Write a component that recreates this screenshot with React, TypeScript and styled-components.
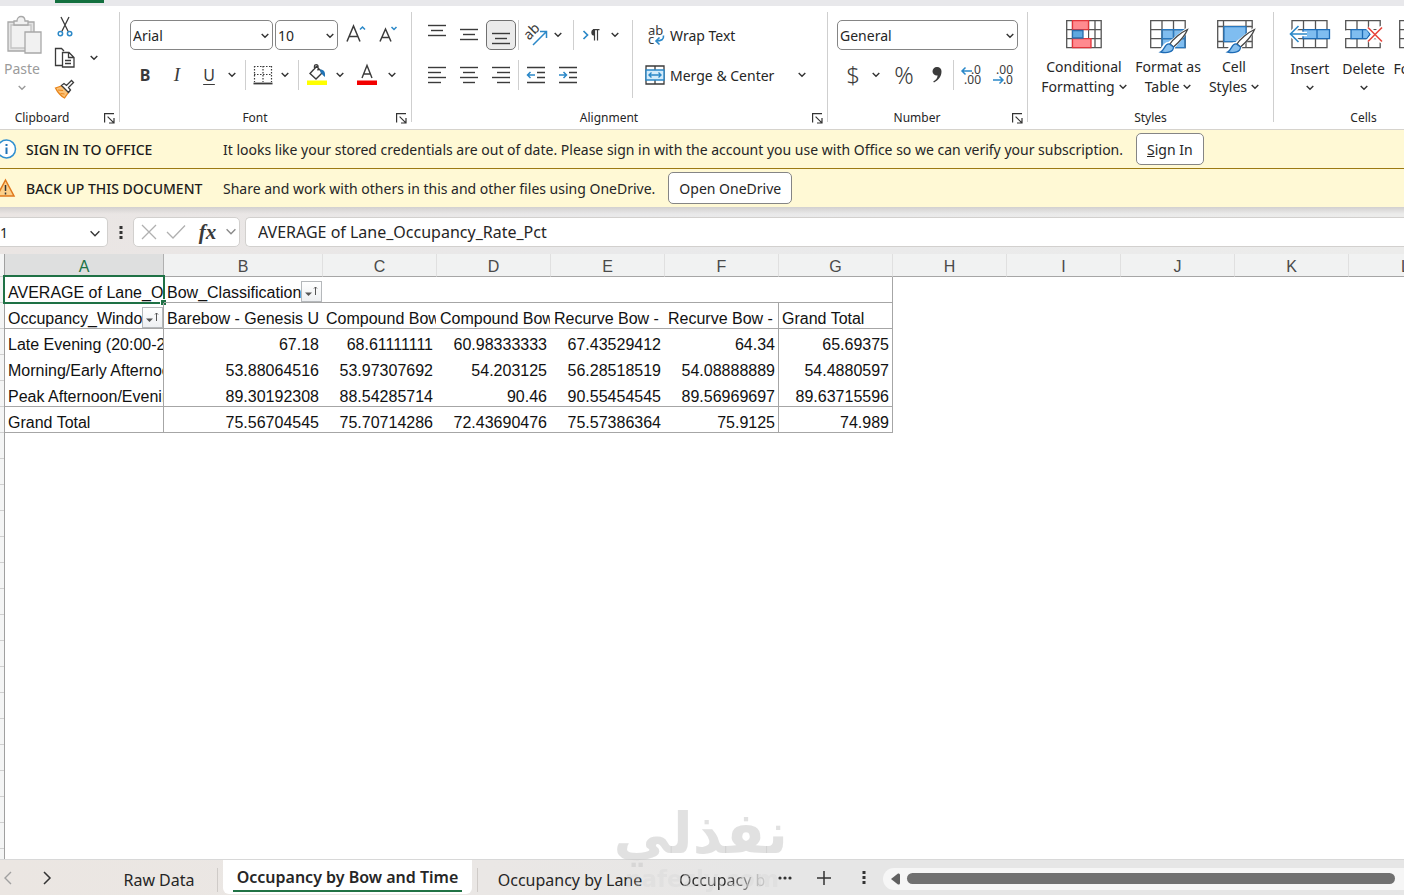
import React from "react";
import styled, { createGlobalStyle, css } from "styled-components";

const ink = "#3b3b3b";
const blue = "#2b88c8";

const GlobalStyle = createGlobalStyle`
  *, *::before, *::after { box-sizing: border-box; }
  body {
    margin: 0;
    font-family: "Noto Sans", "Open Sans", sans-serif;
    font-size: 14px;
    color: #262626;
    background: #fff;
    overflow: hidden;
  }
  button, select, input { font: inherit; color: inherit; }
  button { border: 0; padding: 0; margin: 0; background: none; }
  svg { overflow: visible; }
`;

const Page = styled.div`
  display: flex;
  flex-direction: column;
  height: 100vh;
  overflow: hidden;
`;

/* ---------- Ribbon ---------- */

const TitleStrip = styled.div`
  flex: none;
  height: 6px;
  padding-left: 55px;
  background: #e8e8eb;
`;

const ActiveTabMark = styled.div`
  width: 49px;
  height: 3px;
  background: #13703f;
`;

const Ribbon = styled.header`
  flex: none;
  display: flex;
  height: 124px;
  padding: 6px 0 7px;
  border-bottom: 1px solid #d6d3cd;
  overflow: hidden;
`;

const Group = styled.section<{ $width: number; $last?: boolean }>`
  flex: none;
  display: flex;
  flex-direction: column;
  justify-content: space-between;
  width: ${(p) => p.$width}px;
  border-right: 1px solid ${(p) => (p.$last ? "transparent" : "#cfcfcf")};
`;

const GroupFooter = styled.div<{ $shift?: boolean }>`
  display: flex;
  align-items: center;
  height: 8px;
  font-size: 12px;
  line-height: 8px;
  ${(p) => p.$shift && css`
    & > span { padding-right: 14px; }
  `}
`;

const GroupName = styled.span`
  flex: 1;
  text-align: center;
`;

const Launcher = styled.button`
  display: flex;
  justify-content: flex-end;
  width: 21px;
  padding-right: 4px;
`;

const GroupRows = styled.div<{ $pad: number }>`
  flex: none;
  display: flex;
  flex-direction: column;
  gap: 10px;
  padding: 8px 0 0 ${(p) => p.$pad}px;
`;

const ToolRow = styled.div`
  display: flex;
  align-items: center;
  height: 30px;
`;

const ToolButton = styled.button<{ $w?: number; $on?: boolean }>`
  flex: none;
  display: flex;
  align-items: center;
  justify-content: center;
  width: ${(p) => p.$w ?? 32}px;
  height: 30px;
  color: ${ink};
  ${(p) => p.$on && css`
    width: 30px;
    margin: 0 1px;
    border: 1px solid #707070;
    border-radius: 5px;
    background: #ebebeb;
  `}
`;

const Letter = styled.span<{ $kind: "bold" | "italic" | "under" }>`
  font-size: 16px;
  line-height: 20px;
  ${(p) => p.$kind === "bold" && css`font-weight: 700;`}
  ${(p) => p.$kind === "italic" && css`font-family: "Liberation Serif", serif; font-style: italic; font-size: 19px;`}
  ${(p) => p.$kind === "under" && css`text-decoration: underline; text-underline-offset: 3px;`}
`;

const Symbol = styled.span`
  font-size: 24px;
  line-height: 28px;
  font-weight: 300;
`;

const Divider = styled.div<{ $l?: number; $r?: number }>`
  flex: none;
  width: 1px;
  height: 30px;
  margin: 0 ${(p) => p.$r ?? 2}px 0 ${(p) => p.$l ?? 6}px;
  background: #cfcfcf;
`;

const TallDivider = styled.div`
  flex: none;
  width: 1px;
  height: 78px;
  margin: 8px 0 0;
  background: #cfcfcf;
`;

const Split = styled.div`
  display: flex;
`;

const AlignTools = styled(GroupRows)`
  width: 220px;
`;

const LabelButton = styled.button`
  flex: none;
  display: flex;
  align-items: center;
  gap: 5px;
  height: 30px;
  white-space: nowrap;
`;

const Combo = styled.div<{ $w: number }>`
  position: relative;
  display: flex;
  width: ${(p) => p.$w}px;
  height: 30px;
  margin-right: 2px;
  & > select {
    width: 100%;
    appearance: none;
    padding: 0 20px 0 2px;
    border: 1px solid #858585;
    border-radius: 5px;
    background: #fff;
  }
  & > svg {
    position: absolute;
    right: 4px;
    top: 13px;
    pointer-events: none;
  }
`;

const FontTools = styled(GroupRows)`
  & > div:first-child { padding-left: 1px; }
`;

const ClipboardBody = styled.div`
  display: flex;
`;

const PasteButton = styled.button`
  display: flex;
  flex-direction: column;
  align-items: center;
  width: 44px;
  padding-top: 4px;
  color: #9b9b9b;
  line-height: 20px;
  & > svg:first-child { margin-left: 6px; margin-bottom: 3px; }
  & > svg:last-child { margin-top: 6px; }
`;

const SmallStack = styled.div`
  display: flex;
  flex-direction: column;
  gap: 1px;
  width: 42px;
`;

const CopyMore = styled.button`
  align-self: flex-start;
  width: 16px;
  height: 30px;
  margin-top: 28px;
`;

const BigButtons = styled.div<{ $pad: number }>`
  display: flex;
  padding: 6px ${(p) => p.$pad}px 0;
`;

const BigButton = styled.button<{ $w: number; $stacked?: boolean }>`
  display: flex;
  flex-direction: column;
  align-items: center;
  width: ${(p) => p.$w}px;
  line-height: 20px;
  white-space: nowrap;
  & > svg:first-child { margin-bottom: ${(p) => (p.$stacked ? 5 : 3)}px; }
  & > svg:last-child { margin-top: 6px; }
`;

const LabelLine = styled.span`
  display: flex;
  align-items: center;
  gap: 4px;
`;

/* ---------- Message bars ---------- */

const MessageBar = styled.section<{ $line?: boolean }>`
  flex: none;
  display: flex;
  align-items: center;
  height: ${(p) => (p.$line ? 39 : 38)}px;
  background: #fff9d5;
  white-space: nowrap;
  overflow: hidden;
  border-bottom: ${(p) => (p.$line ? "1px solid #9c7a12" : "0")};
`;

const MessageIcon = styled.span`
  flex: none;
  display: flex;
  width: 26px;
`;

const MessageTitle = styled.strong`
  flex: none;
  width: 197px;
  font-weight: 500;
  color: #1c1c1c;
`;

const MessageButton = styled.button`
  flex: none;
  height: 32px;
  margin-left: 13px;
  padding: 0 10px;
  border: 1px solid #858585;
  border-radius: 5px;
  background: #fff;
`;

/* ---------- Formula bar ---------- */

const FormulaBar = styled.div`
  flex: none;
  display: flex;
  align-items: center;
  height: 47px;
  padding-top: 3px;
  background: linear-gradient(to bottom, #d2d0cf 0, rgba(232, 230, 229, 0) 7px),
    linear-gradient(to right, #eae5e3 0, #e9e9ea 45%, #ececeb 100%);
`;

const NameBox = styled.div`
  position: relative;
  width: 108px;
  height: 30px;
  & > input {
    width: 100%;
    height: 30px;
    padding: 0;
    border: 1px solid #d2d0ce;
    border-left: 0;
    border-radius: 0 5px 5px 0;
    background: #fff;
  }
  & > svg {
    position: absolute;
    right: 7px;
    top: 13px;
  }
`;

const Dots = styled.span`
  display: flex;
  justify-content: center;
  width: 25px;
`;

const FormulaActions = styled.div`
  display: flex;
  align-items: center;
  justify-content: space-between;
  width: 107px;
  height: 30px;
  padding: 0 2px 0 7px;
  border: 1px solid #d2d0ce;
  border-radius: 5px;
  background: #fff;
  & > button { display: flex; }
`;

const Fx = styled.span`
  padding-left: 4px;
  font: italic 700 21px/24px "Liberation Serif", serif;
  color: #3a3a3a;
`;

const FormulaInput = styled.input`
  flex: 1;
  min-width: 0;
  height: 30px;
  margin-left: 5px;
  padding: 0 12px;
  border: 1px solid #d2d0ce;
  border-right: 0;
  border-radius: 5px 0 0 5px;
  background: #fff;
  font-size: 16px;
`;

/* ---------- Sheet ---------- */

const Sheet = styled.main`
  flex: 1;
  display: flex;
  min-height: 0;
  overflow: hidden;
  background: #fff;
`;

const Gutter = styled.div`
  flex: none;
  width: 5px;
  border-right: 1px solid #a0a0a0;
  background: repeating-linear-gradient(to bottom, #f4f5f5 0 22px, #d0d0d0 22px 23px, #f4f5f5 23px 26px);
`;

const Grid = styled.table`
  flex: none;
  align-self: flex-start;
  width: 1458px;
  table-layout: fixed;
  border-collapse: separate;
  border-spacing: 0;
  font-family: "Liberation Sans", Arial, sans-serif;
  font-size: 16px;
  line-height: 20px;
  color: #111;
`;

const ColumnHead = styled.th<{ $on?: boolean }>`
  height: 23px;
  padding: 3px 0 0;
  font-weight: 400;
  line-height: 19px;
  color: ${(p) => (p.$on ? "#217346" : "#4a4a4a")};
  background: ${(p) => (p.$on ? "#dedfdf" : "#f1f2f2")};
  border-right: 1px solid ${(p) => (p.$on ? "#b0b0b0" : "#e0e0e0")};
  border-bottom: 1px solid #a6a6a6;
`;

const Cell = styled.td<{ $num?: boolean; $b?: boolean; $r?: boolean }>`
  position: relative;
  height: 26px;
  padding: 0;
  text-align: ${(p) => (p.$num ? "right" : "left")};
  box-shadow: inset ${(p) => (p.$r ? "-1px" : "0")} 0 #a6a6a6, inset 0 ${(p) => (p.$b ? "-1px" : "0")} #a6a6a6;
`;

const CellText = styled.div`
  height: 26px;
  margin-right: 1px;
  padding: 6px 3px 0 3px;
  overflow: hidden;
  white-space: nowrap;
`;

const Selection = styled.div`
  position: absolute;
  inset: -2px -1px -1px -2px;
  border: 2px solid #1e7145;
  &::after {
    content: "";
    position: absolute;
    right: -3px;
    bottom: -3px;
    width: 6px;
    height: 6px;
    background: #1e7145;
    border-left: 1px solid #fff;
    border-top: 1px solid #fff;
  }
`;

const FilterButton = styled.button`
  position: absolute;
  right: 1px;
  top: 4px;
  display: flex;
  width: 21px;
  height: 21px;
  border: 1px solid #b5b8bb;
  background: linear-gradient(#fff, #eef0f2);
`;

/* ---------- Sheet tabs ---------- */

const TabBar = styled.footer`
  flex: none;
  display: flex;
  height: 36px;
  border-top: 1px solid #d8d8d8;
  background: linear-gradient(to right, #ebe6e2 0, #eae7e5 35%, #e6e6e6 55%);
  font-size: 16px;
  overflow: hidden;
`;

const NavButton = styled.button<{ $w: number }>`
  flex: none;
  display: flex;
  align-items: center;
  justify-content: center;
  width: ${(p) => p.$w}px;
`;

const SheetTab = styled.button<{ $w: number; $left?: boolean; $right?: boolean }>`
  flex: none;
  width: ${(p) => p.$w}px;
  height: 24px;
  margin-top: 8px;
  line-height: 24px;
  white-space: nowrap;
  border-left: 1px solid ${(p) => (p.$left ? "#cfcbc8" : "transparent")};
  border-right: 1px solid ${(p) => (p.$right ? "#cfcbc8" : "transparent")};
`;

const FadingTab = styled(SheetTab)`
  text-align: left;
  padding-left: 15px;
  background: linear-gradient(to right, #262626 60%, #d0d0d0 100%);
  background-clip: text;
  color: transparent;
`;

const ActiveTab = styled.button`
  flex: none;
  min-width: 249px;
  height: 34px;
  margin: 0 5px;
  padding: 0 10px;
  border-radius: 0 0 6px 6px;
  background: #fff;
  font-weight: 600;
  & > span {
    display: block;
    height: 30px;
    line-height: 30px;
    border-bottom: 2px solid #217346;
  }
`;

const ScrollTrack = styled.div`
  flex: 1;
  display: flex;
  align-items: center;
  gap: 6px;
  height: 22px;
  margin-top: 8px;
  padding: 0 9px 1px 8px;
  border-radius: 11px 0 0 11px;
  background: #f6f6f6;
`;

const ScrollThumb = styled.div`
  flex: 1;
  height: 11px;
  border-radius: 6px;
  background: #707070;
`;

const Watermark = styled.div`
  position: fixed;
  left: 50%;
  bottom: 0;
  width: 172px;
  margin-left: -86px;
  height: 97px;
  text-align: center;
  pointer-events: none;
  font-family: "DejaVu Sans", sans-serif;
  font-weight: 700;
  white-space: nowrap;
`;

const WatermarkName = styled.div`
  font-size: 57px;
  line-height: 70px;
  color: rgba(200, 200, 200, 0.55);
`;

const WatermarkSite = styled.div`
  font-size: 23px;
  line-height: 22px;
  color: rgba(215, 215, 215, 0.4);
`;

/* ---------- Icons ---------- */

const Chevron = ({ color = "#333", size = 8 }: { color?: string; size?: number }) => (
  <svg width={size} height={size / 2 + 2} viewBox="0 0 8 6" fill="none" stroke={color} strokeWidth={size > 10 ? 1 : 1.4}>
    <path d="M.7 1 4 4.3 7.3 1" />
  </svg>
);

const More = ({ label }: { label: string }) => (
  <ToolButton $w={14} aria-label={label}><Chevron /></ToolButton>
);

const LauncherIcon = () => (
  <svg width="11" height="11" viewBox="0 0 11 11" fill="none" stroke="#333" strokeWidth="1.2">
    <path d="M.6 9.5V.6h9.4M3.6 3.6l6 6M10 5v5H5" />
  </svg>
);

const PasteIcon = () => (
  <svg width="36" height="40" viewBox="0 0 36 40" fill="#f1f1f1" stroke="#a8a8a8" strokeWidth="1.3">
    <path d="M1 6h26v29H1z" fill="#e4e4e4" />
    <path d="M4 9h20v23H4z" stroke="#c4c4c4" />
    <path d="M7 9V5h3c0-6 8-6 8 0h3v4z" />
    <path d="M18 16h16v21H18z" />
  </svg>
);

const CutIcon = () => (
  <svg width="16" height="22" viewBox="0 0 16 22" fill="none" strokeWidth="1.3">
    <path d="M4 1l7.2 14.5M12 1 4.8 15.5" stroke={ink} />
    <circle cx="3.4" cy="17.6" r="2.2" stroke={blue} strokeWidth="1.5" />
    <circle cx="12.6" cy="17.6" r="2.2" stroke={blue} strokeWidth="1.5" />
  </svg>
);

const CopyIcon = () => (
  <svg width="22" height="22" viewBox="0 0 22 22" fill="none" stroke={ink} strokeWidth="1.3">
    <path d="M8 18.5H1.5v-17h6l2.5 2.5" />
    <path d="M8.5 5.5h6.5l5 5v9.500H8.500zM14.500 5.500v5h5M11 13.500h6M11 16.500h6" />
  </svg>
);

const PainterIcon = () => (
  <svg width="22" height="20" viewBox="0 0 22 20" fill="none">
    <path d="M1.500 9 9 6.500l6 6-4.500 6.500C8 18 3.500 13.500 1.500 9z" fill="#fbc277" stroke="#e8841a" strokeWidth="1.300" />
    <path d="M4 11l5 .5M6.500 14.500l4 .5" stroke="#e8841a" />
    <path d="M7.500 6.500 10 4.500l2.500 2 5-5 2 2-5 5 2 2.500-2 2.500z" fill="#fff" stroke={ink} strokeWidth="1.300" />
  </svg>
);

const GrowIcon = ({ down }: { down?: boolean }) => (
  <svg width="22" height="22" viewBox="0 0 22 22" fill="none" strokeWidth="1.500">
    <path d={down ? "M3 17.500 8.500 5 14 17.500M5 13.500h7" : "M2 17.500 8.500 2 15 17.500M4.500 12.500h8"} stroke={ink} />
    <path d={down ? "M14.500 3l2.500 2.500 2.500-2.500" : "M15 5.500l2.500-2.500L20 5.500"} stroke={blue} />
  </svg>
);

const BordersIcon = () => (
  <svg width="20" height="20" viewBox="0 0 20 20" fill="none" stroke={ink}>
    <path d="M1 1.500h18M1 9.500h18M1.500 1v16M10 1v16M18.500 1v16" strokeDasharray="1.500 1.500" strokeWidth="1.200" />
    <path d="M.5 18.500h19" strokeWidth="1.800" />
  </svg>
);

const FillIcon = () => (
  <svg width="22" height="22" viewBox="0 0 22 22" fill="none">
    <path d="M4 9.500 10.500 2.500l6 6-6.500 6.500zM8.500 5V2.500c0-2.500 3.500-2.500 3.500 0v4" stroke={ink} strokeWidth="1.400" />
    <path d="M14 5.500c4 0 5.500 2 5 7.500-2-1-2.500-3-4.500-4.500z" fill="#2173b5" />
    <path d="M1 16.500h20v4.500H1z" fill="#ffff00" />
  </svg>
);

const FontColorIcon = () => (
  <svg width="22" height="22" viewBox="0 0 22 22" fill="none">
    <path d="M6 14 11 1.500 16 14M7.500 10h7" stroke={ink} strokeWidth="1.400" />
    <path d="M1 16.500h20v4.500H1z" fill="#f20000" />
  </svg>
);

const Lines = ({ rows, dy = 0 }: { rows: [number, number, number][]; dy?: number }) => (
  <svg width="20" height="20" viewBox="0 0 20 20" stroke={ink} strokeWidth="1.400">
    {rows.map(([x1, x2, y]) => (
      <path key={y} d={`M${x1} ${y + dy}H${x2}`} />
    ))}
  </svg>
);

const vertical: [number, number, number][] = [[1, 19, 5.5], [4, 16, 10.5], [1, 19, 15.5]];

const OrientationIcon = () => (
  <svg width="24" height="24" viewBox="0 0 24 24" fill="none">
    <g transform="translate(8 9) rotate(-45)">
      <text x="0" y="4" textAnchor="middle" fontSize="14" fontFamily="Noto Sans" fill={ink}>ab</text>
    </g>
    <path d="M9 22 22 9M16 8.500h6.500V15" stroke={blue} strokeWidth="1.500" />
  </svg>
);

const DirectionIcon = () => (
  <svg width="22" height="20" viewBox="0 0 22 20" fill="none">
    <path d="M2.500 6 6.500 10l-4 4" stroke={blue} strokeWidth="1.700" />
    <path d="M13.500 15.500v-11M16.500 15.500v-11M12 4.700h6.500" stroke={ink} strokeWidth="1.200" />
    <path d="M13.500 4.200a3.200 3.200 0 0 0 0 6.400z" fill={ink} />
  </svg>
);

const IndentIcon = ({ out }: { out?: boolean }) => (
  <svg width="20" height="20" viewBox="0 0 20 20" fill="none" strokeWidth="1.400">
    <path d="M1 2.500h18M11 7.500h8M11 12.500h8M1 17.500h18" stroke={ink} />
    <path d={out ? "M9 10H1.500M4.500 7l-3 3 3 3" : "M1 10h7.500M5.500 7l3 3-3 3"} stroke={blue} strokeWidth="1.500" />
  </svg>
);

const WrapIcon = () => (
  <svg width="20" height="22" viewBox="0 0 20 22" fill="none">
    <text x="3" y="11" fontSize="13" fontFamily="Noto Sans" fill={ink}>ab</text>
    <text x="3" y="20" fontSize="13" fontFamily="Noto Sans" fill={ink}>c</text>
    <path d="M18.500 11.500c.5 4-2 5.500-7.500 5.500M14.500 13.500 11 17l3.500 3.500" stroke={blue} strokeWidth="1.600" />
  </svg>
);

const MergeIcon = () => (
  <svg width="20" height="20" viewBox="0 0 20 20" fill="none">
    <path d="M1 1h18v18H1zM10 1v18" stroke={ink} strokeWidth="1.300" />
    <path d="M1 5h18v10H1z" fill="#d4ebfa" stroke={blue} strokeWidth="1.400" />
    <path d="M4 10h12M6.500 7.500 4 10l2.500 2.500M13.500 7.500 16 10l-2.500 2.500" stroke={blue} strokeWidth="1.400" />
  </svg>
);

const CommaIcon = () => (
  <svg width="12" height="18" viewBox="0 0 12 18" fill={ink}>
    <path d="M6 1a4.300 4.300 0 0 1 4.500 4.600C10.500 10.500 7.500 14.500 3 16.500l-.8-1C5 14 6.500 12 6.600 9.500 4 10 1.500 8 1.500 5.300A4.300 4.300 0 0 1 6 1z" />
  </svg>
);

const DecimalIcon = ({ less }: { less?: boolean }) => (
  <svg width="22" height="24" viewBox="0 0 22 24" fill="none">
    <g fontSize="12" fontFamily="Noto Sans" fill={ink} textAnchor="end">
      <text x="21" y="11">{less ? ".00" : ".0"}</text>
      <text x="21" y="21">{less ? ".0" : ".00"}</text>
    </g>
    <path d={less ? "M1 17h10M7.500 13.500 11 17l-3.500 3.500" : "M12 8H2M5.500 4.500 2 8l3.500 3.500"} stroke={blue} strokeWidth="1.500" />
  </svg>
);

const ConditionalIcon = () => (
  <svg width="36" height="36" viewBox="0 0 36 36" fill="none" strokeWidth="1.300">
    <path d="M.7 2.700h34.500v27H.7zM6.500 2.700v27M29 2.700v27M22.500 2.700v27M.7 11.700h34.500M.7 20.700h34.500" stroke="#555" />
    <path d="M7 12.200h15v8H7z" fill="#fff" />
    <path d="M6.500 2.700h16v9h-16zM6.500 20.700H25v9H6.500z" fill="#ff8a8f" stroke="#e0353b" />
    <path d="M6.500 12.500H17v7.500H6.500z" fill="#5fa8e0" stroke="#2b6cab" />
  </svg>
);

const Brush = () => (
  <g>
    <path d="M38 11 19 26c-5-1-5 6-9 8 7 2 13 0 13-5L38 11z" stroke="#fff" strokeWidth="4" />
    <path d="M37.500 11.500C31 14.500 23 21 20 26l3.500 3C28 25 35 18 37.500 11.500z" fill="#fff" stroke="#444" strokeWidth="1.300" />
    <path d="M19.500 26c-5-1-4.500 6-9 8 7 1.500 13 0 13-5z" fill="#86bfee" stroke="#1d6bb5" strokeWidth="1.300" />
  </g>
);

const TableFormatIcon = () => (
  <svg width="40" height="36" viewBox="-2 0 40 36" fill="none" strokeWidth="1.300">
    <path d="M12 11.700h23v18H12z" fill="#7fbdf0" />
    <path d="M.7 2.700h34.500v27H.7zM12 2.700v27M23.500 2.700v27M.7 11.700h34.500M.7 20.700h34.500" stroke="#555" />
    <path d="M12 29.700v-18h23v18H12M23.500 11.700v18M12 20.700h23" stroke="#2878bf" />
    <Brush />
  </svg>
);

const CellStylesIcon = () => (
  <svg width="42" height="36" viewBox="-4 0 42 36" fill="none" strokeWidth="1.300">
    <path d="M.7 2.700h34.500v27H.7zM6.500 2.700v27M29 2.700v27M.7 8.500h34.500M.7 23.500h34.500" stroke="#555" />
    <path d="M7 8.700h22v15H7z" fill="#7fbdf0" stroke="#2878bf" />
    <Brush />
  </svg>
);

const InsertIcon = () => (
  <svg width="42" height="36" viewBox="0 0 42 36" fill="none" strokeWidth="1.300">
    <path d="M3 2.700h35v27H3zM14.500 2.700v27M26.500 2.700v27M3 11.700h35M3 20.700h35" stroke="#555" />
    <path d="M14 11.700h26.500v9H14zM28 11.700v9" fill="#7fbdf0" stroke="#1d6bb5" />
    <path d="M18 16H1.500M9.500 8 1.500 16l8 8" stroke="#fff" strokeWidth="4.500" />
    <path d="M18 16H1.500M9.500 8 1.500 16l8 8" stroke={blue} strokeWidth="1.600" />
  </svg>
);

const DeleteIcon = () => (
  <svg width="38" height="36" viewBox="0 0 38 36" fill="none" strokeWidth="1.300">
    <path d="M.7 2.700h34.500v27H.7zM12 2.700v27M23.500 2.700v27M.7 11.700h34.500M.7 20.700h34.500" stroke="#555" />
    <path d="M0 12.400h5v7.600H0zM22 12.400h16v7.600H22z" fill="#fff" />
    <path d="M6 11.700h16l3 4.500-3 4.500H6zM17.500 11.700v9" fill="#7fbdf0" stroke="#1d6bb5" />
    <path d="M23 9.500 37 23.500M37 9.500 23 23.500" stroke="#fff" strokeWidth="5" />
    <path d="M23 9.500 37 23.500M37 9.500 23 23.500" stroke="#e8453c" strokeWidth="1.600" />
  </svg>
);

const FormatCellsIcon = () => (
  <svg width="36" height="36" viewBox="0 0 36 36" fill="none" stroke="#555" strokeWidth="1.300">
    <path d="M.7 2.700h34.500v27H.7zM12 2.700v27M23.500 2.700v27M.7 11.700h34.500M.7 20.700h34.500" />
  </svg>
);

const InfoIcon = () => (
  <svg width="17" height="20" viewBox="0 0 17 20" fill="none">
    <circle cx="6.500" cy="10" r="9" fill="#fff" stroke="#2f8fd0" strokeWidth="1.500" />
    <path d="M6.500 8.500V15M6.500 5v2" stroke="#2173b5" strokeWidth="2" />
  </svg>
);

const WarnIcon = () => (
  <svg width="17" height="20" viewBox="0 0 17 20" fill="none">
    <path d="M5.500 2 14 18H-3z" fill="#fcd08a" stroke="#e0781c" strokeWidth="1.500" />
    <path d="M5.500 7v6M5.500 14.500v2" stroke="#333" strokeWidth="1.500" />
  </svg>
);

const DotsIcon = () => (
  <svg width="4" height="15" viewBox="0 0 4 15" fill="#333">
    <path d="M.5 1h3v3h-3zM.5 6h3v3h-3zM.5 11h3v3h-3z" />
  </svg>
);

const SortIcon = () => (
  <svg width="19" height="19" viewBox="0 0 19 19" fill="none">
    <path d="M3 10.500h7L6.500 14z" fill="#555" />
    <path d="M13.500 13V5M12 6.500 13.500 5 15 6.500" stroke="#555" />
  </svg>
);

/* ---------- Data ---------- */

const columns = ["A", "B", "C", "D", "E", "F", "G", "H", "I", "J", "K", "L"];
const widths = [159, 159, 114, 114, 114, 114, 114, 114, 114, 114, 114, 114];

const rows: string[][] = [
  ["AVERAGE of Lane_Occupancy_Rate_Pct", "Bow_Classification", "", "", "", "", ""],
  ["Occupancy_Window", "Barebow - Genesis U", "Compound Bow", "Compound Bow", "Recurve Bow -", "Recurve Bow -", "Grand Total"],
  ["Late Evening (20:00-22:00)", "67.18", "68.61111111", "60.98333333", "67.43529412", "64.34", "65.69375"],
  ["Morning/Early Afternoon", "53.88064516", "53.97307692", "54.203125", "56.28518519", "54.08888889", "54.4880597"],
  ["Peak Afternoon/Evening", "89.30192308", "88.54285714", "90.46", "90.55454545", "89.56969697", "89.63715596"],
  ["Grand Total", "75.56704545", "75.70714286", "72.43690476", "75.57386364", "75.9125", "74.989"],
];

const ruledRows = [0, 1, 4, 5];

const hasRightRule = (r: number, c: number) =>
  c === 6 || c === 0 || (c === 5 && r > 0);

const Footer = ({ name, launcher, shift }: { name: string; launcher?: boolean; shift?: boolean }) => (
  <GroupFooter $shift={shift}>
    <GroupName>{name}</GroupName>
    {launcher && <Launcher aria-label={`${name} settings`}><LauncherIcon /></Launcher>}
  </GroupFooter>
);

export default function App() {
  return (
    <Page>
      <GlobalStyle />
      <TitleStrip><ActiveTabMark /></TitleStrip>

      <Ribbon>
        <Group $width={120}>
          <ClipboardBody>
            <PasteButton>
              <PasteIcon />
              Paste
              <Chevron color="#9b9b9b" />
            </PasteButton>
            <SmallStack>
              <ToolButton $w={42} aria-label="Cut"><CutIcon /></ToolButton>
              <ToolButton $w={42} aria-label="Copy"><CopyIcon /></ToolButton>
              <ToolButton $w={42} aria-label="Format Painter"><PainterIcon /></ToolButton>
            </SmallStack>
            <CopyMore aria-label="Copy options"><Chevron /></CopyMore>
          </ClipboardBody>
          <Footer name="Clipboard" launcher shift />
        </Group>

        <Group $width={292}>
          <FontTools $pad={9}>
            <ToolRow>
              <Combo $w={143}>
                <select aria-label="Font"><option>Arial</option></select>
                <Chevron />
              </Combo>
              <Combo $w={63}>
                <select aria-label="Font size"><option>10</option></select>
                <Chevron />
              </Combo>
              <ToolButton aria-label="Increase font size"><GrowIcon /></ToolButton>
              <ToolButton aria-label="Decrease font size"><GrowIcon down /></ToolButton>
            </ToolRow>
            <ToolRow>
              <ToolButton><Letter $kind="bold">B</Letter></ToolButton>
              <ToolButton><Letter $kind="italic">I</Letter></ToolButton>
              <ToolButton><Letter $kind="under">U</Letter></ToolButton>
              <More label="Underline options" />
              <Divider />
              <ToolButton $w={30} aria-label="Borders"><BordersIcon /></ToolButton>
              <More label="Border options" />
              <Divider />
              <ToolButton aria-label="Fill color"><FillIcon /></ToolButton>
              <More label="Fill options" />
              <ToolButton $w={40} aria-label="Font color"><FontColorIcon /></ToolButton>
              <ToolButton $w={10} aria-label="Font color options"><Chevron /></ToolButton>
            </ToolRow>
          </FontTools>
          <Footer name="Font" launcher />
        </Group>

        <Group $width={416}>
          <Split>
            <AlignTools $pad={9}>
              <ToolRow>
                <ToolButton aria-label="Top align"><Lines rows={vertical} dy={-5} /></ToolButton>
                <ToolButton aria-label="Middle align"><Lines rows={vertical} dy={-1} /></ToolButton>
                <ToolButton $on aria-label="Bottom align"><Lines rows={vertical} dy={3} /></ToolButton>
                <Divider $l={1} $r={1} />
                <ToolButton aria-label="Orientation"><OrientationIcon /></ToolButton>
                <ToolButton $w={12} aria-label="Orientation options"><Chevron /></ToolButton>
                <Divider $l={9} />
                <ToolButton aria-label="Text direction"><DirectionIcon /></ToolButton>
                <More label="Text direction options" />
              </ToolRow>
              <ToolRow>
                <ToolButton aria-label="Align left">
                  <Lines rows={[[1, 19, 2.5], [1, 14, 7.5], [1, 19, 12.5], [1, 14, 17.5]]} />
                </ToolButton>
                <ToolButton aria-label="Center">
                  <Lines rows={[[1, 19, 2.5], [4, 16, 7.5], [1, 19, 12.5], [4, 16, 17.5]]} />
                </ToolButton>
                <ToolButton aria-label="Align right">
                  <Lines rows={[[1, 19, 2.5], [6, 19, 7.5], [1, 19, 12.5], [6, 19, 17.5]]} />
                </ToolButton>
                <Divider $l={1} $r={1} />
                <ToolButton aria-label="Decrease indent"><IndentIcon out /></ToolButton>
                <ToolButton aria-label="Increase indent"><IndentIcon /></ToolButton>
              </ToolRow>
            </AlignTools>
            <TallDivider />
            <GroupRows $pad={12}>
              <LabelButton><WrapIcon />Wrap Text</LabelButton>
              <ToolRow>
                <LabelButton><MergeIcon />Merge &amp; Center</LabelButton>
                <ToolButton $w={56} aria-label="Merge options"><Chevron /></ToolButton>
              </ToolRow>
            </GroupRows>
          </Split>
          <Footer name="Alignment" launcher />
        </Group>

        <Group $width={200}>
          <GroupRows $pad={9}>
            <Combo $w={181}>
              <select aria-label="Number format"><option>General</option></select>
              <Chevron />
            </Combo>
            <ToolRow>
              <ToolButton><Symbol>$</Symbol></ToolButton>
              <More label="Currency options" />
              <ToolButton $w={42}><Symbol>%</Symbol></ToolButton>
              <ToolButton $w={24} aria-label="Comma style"><CommaIcon /></ToolButton>
              <Divider $l={4} $r={1} />
              <ToolButton aria-label="Increase decimal"><DecimalIcon /></ToolButton>
              <ToolButton aria-label="Decrease decimal"><DecimalIcon less /></ToolButton>
            </ToolRow>
          </GroupRows>
          <Footer name="Number" launcher />
        </Group>

        <Group $width={246}>
          <BigButtons $pad={8}>
            <BigButton $w={96}>
              <ConditionalIcon />
              <span>Conditional</span>
              <LabelLine>Formatting <Chevron /></LabelLine>
            </BigButton>
            <BigButton $w={72}>
              <TableFormatIcon />
              <span>Format as</span>
              <LabelLine>Table <Chevron /></LabelLine>
            </BigButton>
            <BigButton $w={60}>
              <CellStylesIcon />
              <span>Cell</span>
              <LabelLine>Styles <Chevron /></LabelLine>
            </BigButton>
          </BigButtons>
          <Footer name="Styles" />
        </Group>

        <Group $width={180} $last>
          <BigButtons $pad={9}>
            <BigButton $w={54} $stacked><InsertIcon />Insert<Chevron /></BigButton>
            <BigButton $w={54} $stacked><DeleteIcon />Delete<Chevron /></BigButton>
            <BigButton $w={54} $stacked><FormatCellsIcon />Format<Chevron /></BigButton>
          </BigButtons>
          <Footer name="Cells" />
        </Group>
      </Ribbon>

      <MessageBar $line>
        <MessageIcon><InfoIcon /></MessageIcon>
        <MessageTitle>SIGN IN TO OFFICE</MessageTitle>
        <span>It looks like your stored credentials are out of date. Please sign in with the account you use with Office so we can verify your subscription.</span>
        <MessageButton><u>S</u>ign In</MessageButton>
      </MessageBar>
      <MessageBar>
        <MessageIcon><WarnIcon /></MessageIcon>
        <MessageTitle>BACK UP THIS DOCUMENT</MessageTitle>
        <span>Share and work with others in this and other files using OneDrive.</span>
        <MessageButton>Open OneDrive</MessageButton>
      </MessageBar>

      <FormulaBar>
        <NameBox>
          <input aria-label="Name box" defaultValue="1" />
          <Chevron size={12} />
        </NameBox>
        <Dots><DotsIcon /></Dots>
        <FormulaActions>
          <button aria-label="Cancel">
            <svg width="16" height="16" viewBox="0 0 16 16" stroke="#b0b0b0" strokeWidth="1.300"><path d="M1 1l14 14M15 1 1 15" /></svg>
          </button>
          <button aria-label="Enter">
            <svg width="20" height="16" viewBox="0 0 20 16" fill="none" stroke="#b0b0b0" strokeWidth="1.300"><path d="M1 8l6 6L19 1.500" /></svg>
          </button>
          <button aria-label="Insert function"><Fx>fx</Fx></button>
          <Chevron size={12} color="#888" />
        </FormulaActions>
        <FormulaInput aria-label="Formula" defaultValue="AVERAGE of Lane_Occupancy_Rate_Pct" />
      </FormulaBar>

      <Sheet>
        <Gutter />
        <Grid>
          <colgroup>
            {widths.map((w, i) => <col key={i} width={w} />)}
          </colgroup>
          <thead>
            <tr>
              {columns.map((c, i) => <ColumnHead key={c} $on={i === 0}>{c}</ColumnHead>)}
            </tr>
          </thead>
          <tbody>
            {rows.map((row, r) => (
              <tr key={r}>
                {row.map((text, c) => (
                  <Cell key={c} $num={r > 1 && c > 0} $b={ruledRows.includes(r)} $r={hasRightRule(r, c)}>
                    <CellText>{text}</CellText>
                    {r === 0 && c === 0 && <Selection />}
                    {((r === 0 && c === 1) || (r === 1 && c === 0)) && (
                      <FilterButton aria-label={`Filter ${text}`}><SortIcon /></FilterButton>
                    )}
                  </Cell>
                ))}
              </tr>
            ))}
          </tbody>
        </Grid>
      </Sheet>

      <TabBar>
        <NavButton $w={14} aria-label="Previous sheet">
          <svg width="9" height="14" viewBox="0 0 9 14" fill="none" stroke="#a0a0a0" strokeWidth="1.400"><path d="M8 1 2 7l6 6" /></svg>
        </NavButton>
        <NavButton $w={66} aria-label="Next sheet">
          <svg width="9" height="14" viewBox="0 0 9 14" fill="none" stroke="#333" strokeWidth="1.500"><path d="M1 1l6 6-6 6" /></svg>
        </NavButton>
        <NavButton $w={20} as="span" />
        <SheetTab $w={118} $right>Raw Data</SheetTab>
        <ActiveTab><span>Occupancy by Bow and Time</span></ActiveTab>
        <SheetTab $w={186} $left>Occupancy by Lane</SheetTab>
        <FadingTab $w={104}>Occupacy b</FadingTab>
        <NavButton $w={36} aria-label="More sheets">
          <svg width="14" height="4" viewBox="0 0 14 4" fill="#333"><circle cx="2" cy="2" r="1.600" /><circle cx="7" cy="2" r="1.600" /><circle cx="12" cy="2" r="1.600" /></svg>
        </NavButton>
        <NavButton $w={42} aria-label="New sheet">
          <svg width="14" height="14" viewBox="0 0 14 14" stroke="#333" strokeWidth="1.500"><path d="M7 0v14M0 7h14" /></svg>
        </NavButton>
        <NavButton $w={38} as="span"><DotsIcon /></NavButton>
        <ScrollTrack>
          <svg width="10" height="12" viewBox="0 0 10 12" fill="#606060"><path d="M0 6 7 .5Q9 0 9 2v8q0 2-2 1.500z" /></svg>
          <ScrollThumb />
        </ScrollTrack>
      </TabBar>

      <Watermark aria-hidden="true">
        <WatermarkName lang="ar" dir="rtl">نفذلي</WatermarkName>
        <WatermarkSite>nafezly.com</WatermarkSite>
      </Watermark>
    </Page>
  );
}
